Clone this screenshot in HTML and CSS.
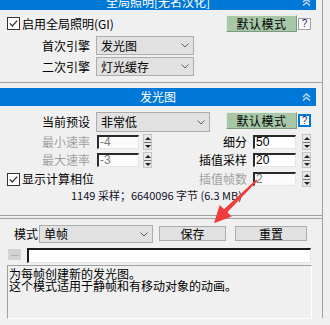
FILE: index.html
```html
<!DOCTYPE html>
<html>
<head>
<meta charset="utf-8">
<link rel="stylesheet" href="styles.css">
</head>
<body>
<div class="stage">
  <div class="rollout r1">
    <div class="hdr">
      <span></span>
      <span class="hdr-title">全局照明[无名汉化]</span>
      <svg class="hchev" width="9" height="8" viewBox="0 0 9 8"><polyline points="1,4 4.5,1 8,4" /><polyline points="1,7.5 4.5,4.5 8,7.5" /></svg>
    </div>
    <div class="body b1">
      <div class="row row-gi">
        <div class="chk">
          <svg class="cb" width="13" height="13" viewBox="0 0 13 13"><rect x="0.5" y="0.5" width="12" height="12" /><polyline points="2.8,6.4 5.3,9 10.2,3.6" /></svg>
          <span>启用全局照明(GI)</span>
        </div>
        <div class="rgroup">
          <div class="btn-default">默认模式</div>
          <div class="help">?</div>
        </div>
      </div>
      <div class="row row-sel">
        <span class="lbl">首次引擎</span>
        <div class="select w98"><span>发光图</span><svg class="dchev" width="8" height="5" viewBox="0 0 8 5"><polyline points="0.5,0.5 4,4 7.5,0.5" /></svg></div>
      </div>
      <div class="row row-sel row-sel2">
        <span class="lbl">二次引擎</span>
        <div class="select w98"><span>灯光缓存</span><svg class="dchev" width="8" height="5" viewBox="0 0 8 5"><polyline points="0.5,0.5 4,4 7.5,0.5" /></svg></div>
      </div>
    </div>
  </div>

  <div class="rollout r2">
    <div class="hdr">
      <span></span>
      <span class="hdr-title">发光图</span>
      <svg class="hchev" width="9" height="8" viewBox="0 0 9 8"><polyline points="1,4 4.5,1 8,4" /><polyline points="1,7.5 4.5,4.5 8,7.5" /></svg>
    </div>
    <div class="body b2">
      <div class="row row-preset">
        <span class="lbl">当前预设</span>
        <div class="select w114"><span>非常低</span><svg class="dchev" width="8" height="5" viewBox="0 0 8 5"><polyline points="0.5,0.5 4,4 7.5,0.5" /></svg></div>
        <div class="rgroup">
          <div class="btn-default">默认模式</div>
          <div class="help help-focus">?</div>
        </div>
      </div>

      <div class="row row-num">
        <span class="lbl dis">最小速率</span>
        <div class="field fl dis-field">-4</div>
        <div class="spin"><span class="up"></span><span class="dn"></span></div>
        <span class="rlbl">细分</span>
        <div class="field fr">50</div>
        <div class="spin sr"><span class="up"></span><span class="dn"></span></div>
      </div>

      <div class="row row-num">
        <span class="lbl dis">最大速率</span>
        <div class="field fl dis-field">-3</div>
        <div class="spin"><span class="up"></span><span class="dn"></span></div>
        <span class="rlbl">插值采样</span>
        <div class="field fr">20</div>
        <div class="spin sr"><span class="up"></span><span class="dn"></span></div>
      </div>

      <div class="row row-num row-phase">
        <div class="chk">
          <svg class="cb" width="13" height="13" viewBox="0 0 13 13"><rect x="0.5" y="0.5" width="12" height="12" /><polyline points="2.8,6.4 5.3,9 10.2,3.6" /></svg>
          <span>显示计算相位</span>
        </div>
        <div class="rgroup">
          <span class="rlbl dis">插值帧数</span>
          <div class="field fr dis-field">2</div>
          <div class="spin sr"><span class="up"></span><span class="dn"></span></div>
        </div>
      </div>

      <div class="info">1149 采样；6640096 字节 (6.3 MB)</div>

      <div class="sep"></div>

      <div class="row row-mode">
        <span class="mlbl">模式</span>
        <div class="select w114 msel"><span>单帧</span><svg class="dchev" width="8" height="5" viewBox="0 0 8 5"><polyline points="0.5,0.5 4,4 7.5,0.5" /></svg></div>
        <div class="btn b-save">保存</div>
        <div class="btn b-reset">重置</div>
      </div>

      <div class="row row-path">
        <div class="dots">...</div>
        <div class="path"></div>
      </div>

      <div class="desc">为每帧创建新的发光图。<br>这个模式适用于静帧和有移动对象的动画。</div>
    </div>
  </div>
</div>

<svg class="arrow" width="330" height="325" viewBox="0 0 330 325">
  <polygon points="256.3,179.4 257.5,180.8 227.4,212.2 231.8,216.4 214,223.2 219.7,205.0 224.0,209.2" />
</svg>
</body>
</html>
```

FILE: styles.css
```css
* { box-sizing: border-box; }
html, body { margin: 0; padding: 0; }
body {
  width: 330px;
  height: 325px;
  overflow: hidden;
  background: #f0f0f0;
  font-family: "Noto Sans CJK SC", "Liberation Sans", sans-serif;
  font-size: 12px;
  color: #000;
  position: relative;
}
.stage {
  width: 323px;
  height: 325px;
  border-right: 1px solid #a0a0a0;
}

/* headers */
.hdr {
  width: 316px;
  height: 18px;
  background: #0078d7;
  color: #fff;
  display: grid;
  grid-template-columns: 1fr auto 1fr;
  align-items: center;
  line-height: 18px;
}
.hdr-title { font-size: 12px; }
.hchev {
  justify-self: end;
  margin-right: 5px;
  fill: none;
  stroke: #b9d3ee;
  stroke-width: 1.6;
}
.r1 .hdr { margin-top: -7px; height: 17px; }
.r2 { margin-top: 5px; }

/* bodies */
.body { padding-right: 11px; }
.b1 { border-bottom: 1px solid #a0a0a0; padding-bottom: 6px; }

.row { display: flex; align-items: center; line-height: 14px; }
.lbl {
  width: 90px;
  text-align: right;
  flex: none;
  white-space: nowrap;
}
.dis { color: #a0a0a0; }

.chk { display: flex; align-items: center; margin-left: 7px; white-space: nowrap; }
.cb { flex: none; margin-right: 2px; }
.cb rect { fill: #ffffff; stroke: #333333; }
.cb polyline { fill: none; stroke: #333333; stroke-width: 1.3; }

.rgroup { margin-left: auto; display: flex; align-items: flex-start; }

.btn-default {
  width: 71px;
  height: 17px;
  background: #a7c7a7;
  border: 1px solid;
  border-color: #e4eee4 #7e9a7e #7e9a7e #e4eee4;
  text-align: center;
  line-height: 15px;
  letter-spacing: 0.5px;
}
.help {
  width: 13px;
  height: 12px;
  margin-left: 1px;
  margin-top: 3px;
  background: #f8f8f8;
  border: 1px solid #a0a0a0;
  color: #1a1a70;
  font-family: "Liberation Sans", sans-serif;
  font-size: 10px;
  line-height: 10px;
  text-align: center;
}
.help-focus {
  border: 2px solid #0078d7;
  margin-top: 2px;
  height: 13px;
  line-height: 9px;
  background: #fff;
}

.select {
  flex: none;
  display: flex;
  align-items: center;
  justify-content: space-between;
  height: 19px;
  margin-left: 6px;
  background: #e1e1e1;
  border: 1px solid #adadad;
  padding: 0 4px 0 4px;
  white-space: nowrap;
}
.w98 { width: 98px; }
.w114 { width: 114px; }
.dchev { fill: none; stroke: #606060; stroke-width: 1; }

.row-gi { margin-top: 5px; height: 17px; }
.b1 .row-sel { margin-top: 4px; height: 19px; }
.b1 .row-sel2 { margin-top: 2px; }

/* rollout 2 */
.row-preset { margin-top: 6px; height: 20px; align-items: flex-start; }
.row-preset .lbl { line-height: 20px; }
.row-preset .select { height: 20px; }
.row-preset .rgroup { margin-left: 16px; }

.row-num { margin-top: 2px; height: 16px; }
.field {
  flex: none;
  height: 14px;
  background: #fff;
  border-style: solid;
  border-width: 2px 1px 1px 2px;
  border-color: #2a2a2a #e6e6e6 #e6e6e6 #2a2a2a;
  font-family: "Liberation Sans", sans-serif;
  font-size: 12px;
  line-height: 11px;
  padding-left: 1px;
}
.fl { width: 42px; margin-left: 7px; }
.fr { width: 43px; margin-left: 6px; }
.dis-field { color: #7a7a7a; background: #fbfbfb; }

.spin {
  flex: none;
  width: 9px;
  height: 16px;
  margin-left: 4px;
  display: flex;
  flex-direction: column;
  background: #e8e8e8;
  border: 1px solid #c4c4c4;
}
.spin.sr { margin-left: 6px; }
.spin span { flex: 1; position: relative; }
.spin .up { border-bottom: 1px solid #707070; }
.spin .up::after, .spin .dn::after {
  content: "";
  position: absolute;
  left: 1px;
  border-left: 3px solid transparent;
  border-right: 3px solid transparent;
}
.spin .up::after { top: 2px; border-bottom: 3px solid #202020; }
.spin .dn::after { top: 2px; border-top: 3px solid #202020; }

.rlbl {
  width: 95px;
  text-align: right;
  flex: none;
  white-space: nowrap;
}
.row-phase { margin-top: 3px; height: 16px; }
.row-phase .rgroup { align-items: center; }
.row-phase .rlbl { width: auto; }

.info {
  margin-top: 1px;
  height: 14px;
  line-height: 14px;
  padding-left: 71px;
  white-space: nowrap;
  font-size: 11px;
  color: #101028;
}

.sep {
  margin-top: 13px;
  height: 4px;
  border-top: 1px solid #a0a0a0;
  border-bottom: 1px solid #a0a0a0;
  margin-right: -11px;
}

.row-mode { margin-top: 6px; height: 18px; align-items: flex-start; }
.mlbl { margin-left: 14px; line-height: 18px; }
.msel { margin-left: 1px; height: 18px; }
.btn {
  flex: none;
  height: 15px;
  margin-top: 1px;
  background: #e1e1e1;
  border: 1px solid #adadad;
  text-align: center;
  line-height: 13px;
}
.b-save { width: 67px; margin-left: 6px; }
.b-reset { width: 72px; margin-left: 9px; }

.row-path { margin-top: 5px; height: 15px; align-items: flex-start; }
.dots {
  width: 14px;
  height: 11px;
  margin-left: 8px;
  margin-top: 1px;
  background: #d2d2d2;
  color: #8a8a8a;
  font-family: "Liberation Sans", sans-serif;
  font-size: 10px;
  line-height: 8px;
  text-align: center;
  letter-spacing: -0.5px;
}
.path {
  flex: none;
  width: 284px;
  height: 15px;
  margin-left: 6px;
  background: #fff;
  border-style: solid;
  border-width: 2px 1px 1px 2px;
  border-color: #1a1a1a #e6e6e6 #e6e6e6 #1a1a1a;
}

.desc {
  margin-top: 2px;
  margin-left: 7px;
  margin-right: -1px;
  height: 54px;
  border: 1px solid;
  border-color: #a0a0a0 #ffffff #ffffff #a0a0a0;
  padding: 2px 0 0 1px;
  line-height: 12px;
  white-space: nowrap;
  overflow: hidden;
}

.arrow {
  position: absolute;
  left: 0;
  top: 0;
  pointer-events: none;
}
.arrow polygon { fill: #f03c3c; }
```
